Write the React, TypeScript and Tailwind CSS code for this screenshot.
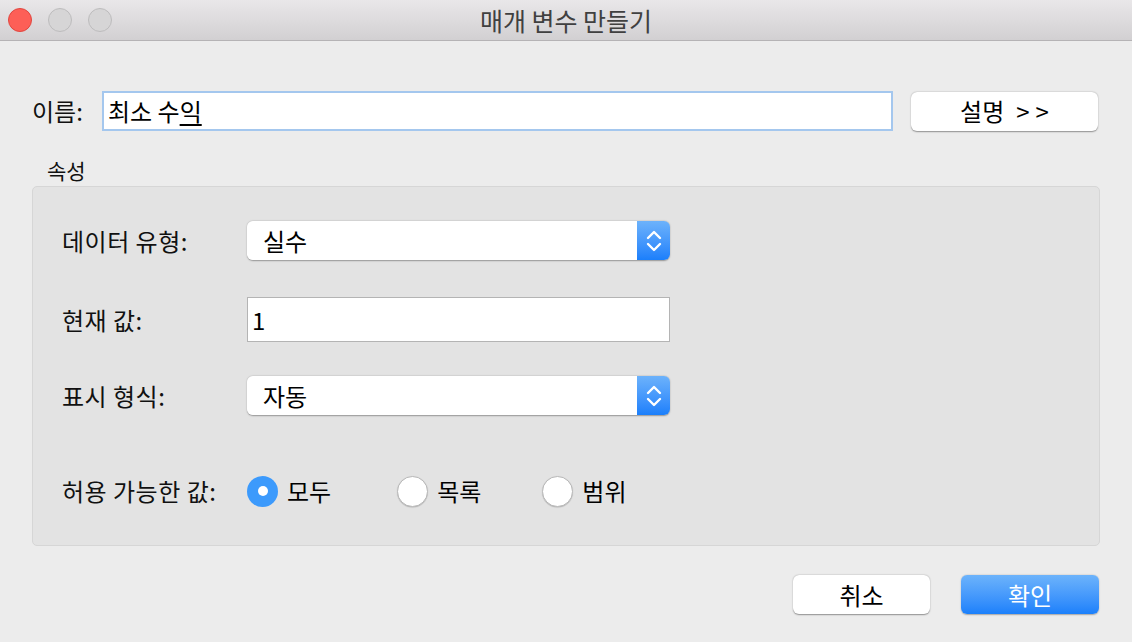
import React from "react";

const font = { fontFamily: '"Noto Sans CJK KR", "Noto Sans", sans-serif' };

const Chevrons = () => (
  <svg width="16" height="26" viewBox="0 0 16 26" fill="none">
    <path d="M2 10 L8 4 L14 10" stroke="white" strokeWidth="2.4" strokeLinecap="round" strokeLinejoin="round" />
    <path d="M2 16 L8 22 L14 16" stroke="white" strokeWidth="2.4" strokeLinecap="round" strokeLinejoin="round" />
  </svg>
);

const PopUp = ({ value }: { value: string }) => (
  <div className="flex h-[39px] w-[423px] rounded-[6px] shadow-[0_0.5px_1.5px_rgba(0,0,0,0.35)]">
    <div className="flex-1 flex items-center bg-white rounded-l-[6px] pl-[16px] text-[24px] text-black">
      {value}
    </div>
    <div className="w-[33px] flex items-center justify-center rounded-r-[6px] bg-gradient-to-b from-[#6cb2fb] to-[#1a7ffb]">
      <Chevrons />
    </div>
  </div>
);

const Radio = ({ label, checked }: { label: string; checked?: boolean }) => (
  <div className="flex items-center gap-[9px]">
    {checked ? (
      <div className="w-[31px] h-[31px] rounded-full bg-[#3c9afc] flex items-center justify-center">
        <div className="w-[10px] h-[10px] rounded-full bg-white" />
      </div>
    ) : (
      <div className="w-[31px] h-[31px] rounded-full bg-white border border-[#b9b9b9] shadow-[0_0.5px_1px_rgba(0,0,0,0.2)]" />
    )}
    <span className="text-[24px] text-black">{label}</span>
  </div>
);

const Label = ({ children }: { children: React.ReactNode }) => (
  <div className="w-[185px] text-[24px] text-[#111] tracking-[0.5px]">{children}</div>
);

export default function App() {
  return (
    <div style={font} className="w-[1132px] h-[642px] bg-[#ececec] flex flex-col overflow-hidden">
      {/* title bar */}
      <div className="h-[41px] relative flex items-center justify-center bg-gradient-to-b from-[#e9e7e9] to-[#d2d0d2] border-b border-[#b5b3b5]">
        <div className="absolute left-[8px] top-[8px] flex gap-[16px]">
          <div className="w-[24px] h-[24px] rounded-full bg-[#fd5f57] border border-[#e1463f]" />
          <div className="w-[24px] h-[24px] rounded-full bg-[#d6d5d6] border border-[#bdbcbd]" />
          <div className="w-[24px] h-[24px] rounded-full bg-[#d6d5d6] border border-[#bdbcbd]" />
        </div>
        <span className="text-[25px] text-[#404040] leading-none">매개 변수 만들기</span>
      </div>

      <div className="flex flex-col px-[32px]">
        {/* name row */}
        <div className="flex items-center mt-[50px]">
          <div className="w-[70px] text-[24px] text-[#111]">이름:</div>
          <div className="w-[791px] h-[40px] bg-white border-2 border-[#a4c7ee] flex items-center pl-[4px] text-[24px] text-black">
            최소 수<span className="underline underline-offset-[3px]">익</span>
          </div>
          <button className="ml-[18px] w-[187px] h-[39px] bg-white rounded-[6px] shadow-[0_0.5px_1.5px_rgba(0,0,0,0.4)] text-[24px] text-black">
            설명<span className="ml-[12px] tracking-[6px] mr-[-6px]">&gt;&gt;</span>
          </button>
        </div>

        <div className="mt-[26px] ml-[15px] text-[21px] text-[#111] leading-[26px]">속성</div>

        {/* properties group */}
        <div className="mt-[3px] h-[360px] rounded-[5px] bg-[#e3e3e3] border border-[#d6d6d6] pl-[29px] pt-[34px] flex flex-col">
          <div className="flex items-center">
            <Label>데이터 유형:</Label>
            <PopUp value="실수" />
          </div>
          <div className="flex items-center mt-[37px]">
            <Label>현재 값:</Label>
            <div className="w-[423px] h-[45px] bg-white border border-[#b4b4b4] flex items-center pl-[4px] text-[24px] text-black">
              1
            </div>
          </div>
          <div className="flex items-center mt-[34px]">
            <Label>표시 형식:</Label>
            <PopUp value="자동" />
          </div>
          <div className="flex items-center mt-[58px]">
            <Label>허용 가능한 값:</Label>
            <div className="flex items-center">
              <Radio label="모두" checked />
              <div className="w-[66px]" />
              <Radio label="목록" />
              <div className="w-[61px]" />
              <Radio label="범위" />
            </div>
          </div>
        </div>

        {/* buttons */}
        <div className="flex justify-end gap-[31px] mt-[29px] pr-[1px]">
          <button className="w-[137px] h-[39px] bg-white rounded-[6px] shadow-[0_0.5px_1.5px_rgba(0,0,0,0.4)] text-[24px] text-black">
            취소
          </button>
          <button className="w-[138px] h-[39px] rounded-[6px] bg-gradient-to-b from-[#6cb3fb] to-[#1a80fb] shadow-[0_0.5px_1.5px_rgba(0,0,0,0.3)] text-[24px] text-white">
            확인
          </button>
        </div>
      </div>
    </div>
  );
}
